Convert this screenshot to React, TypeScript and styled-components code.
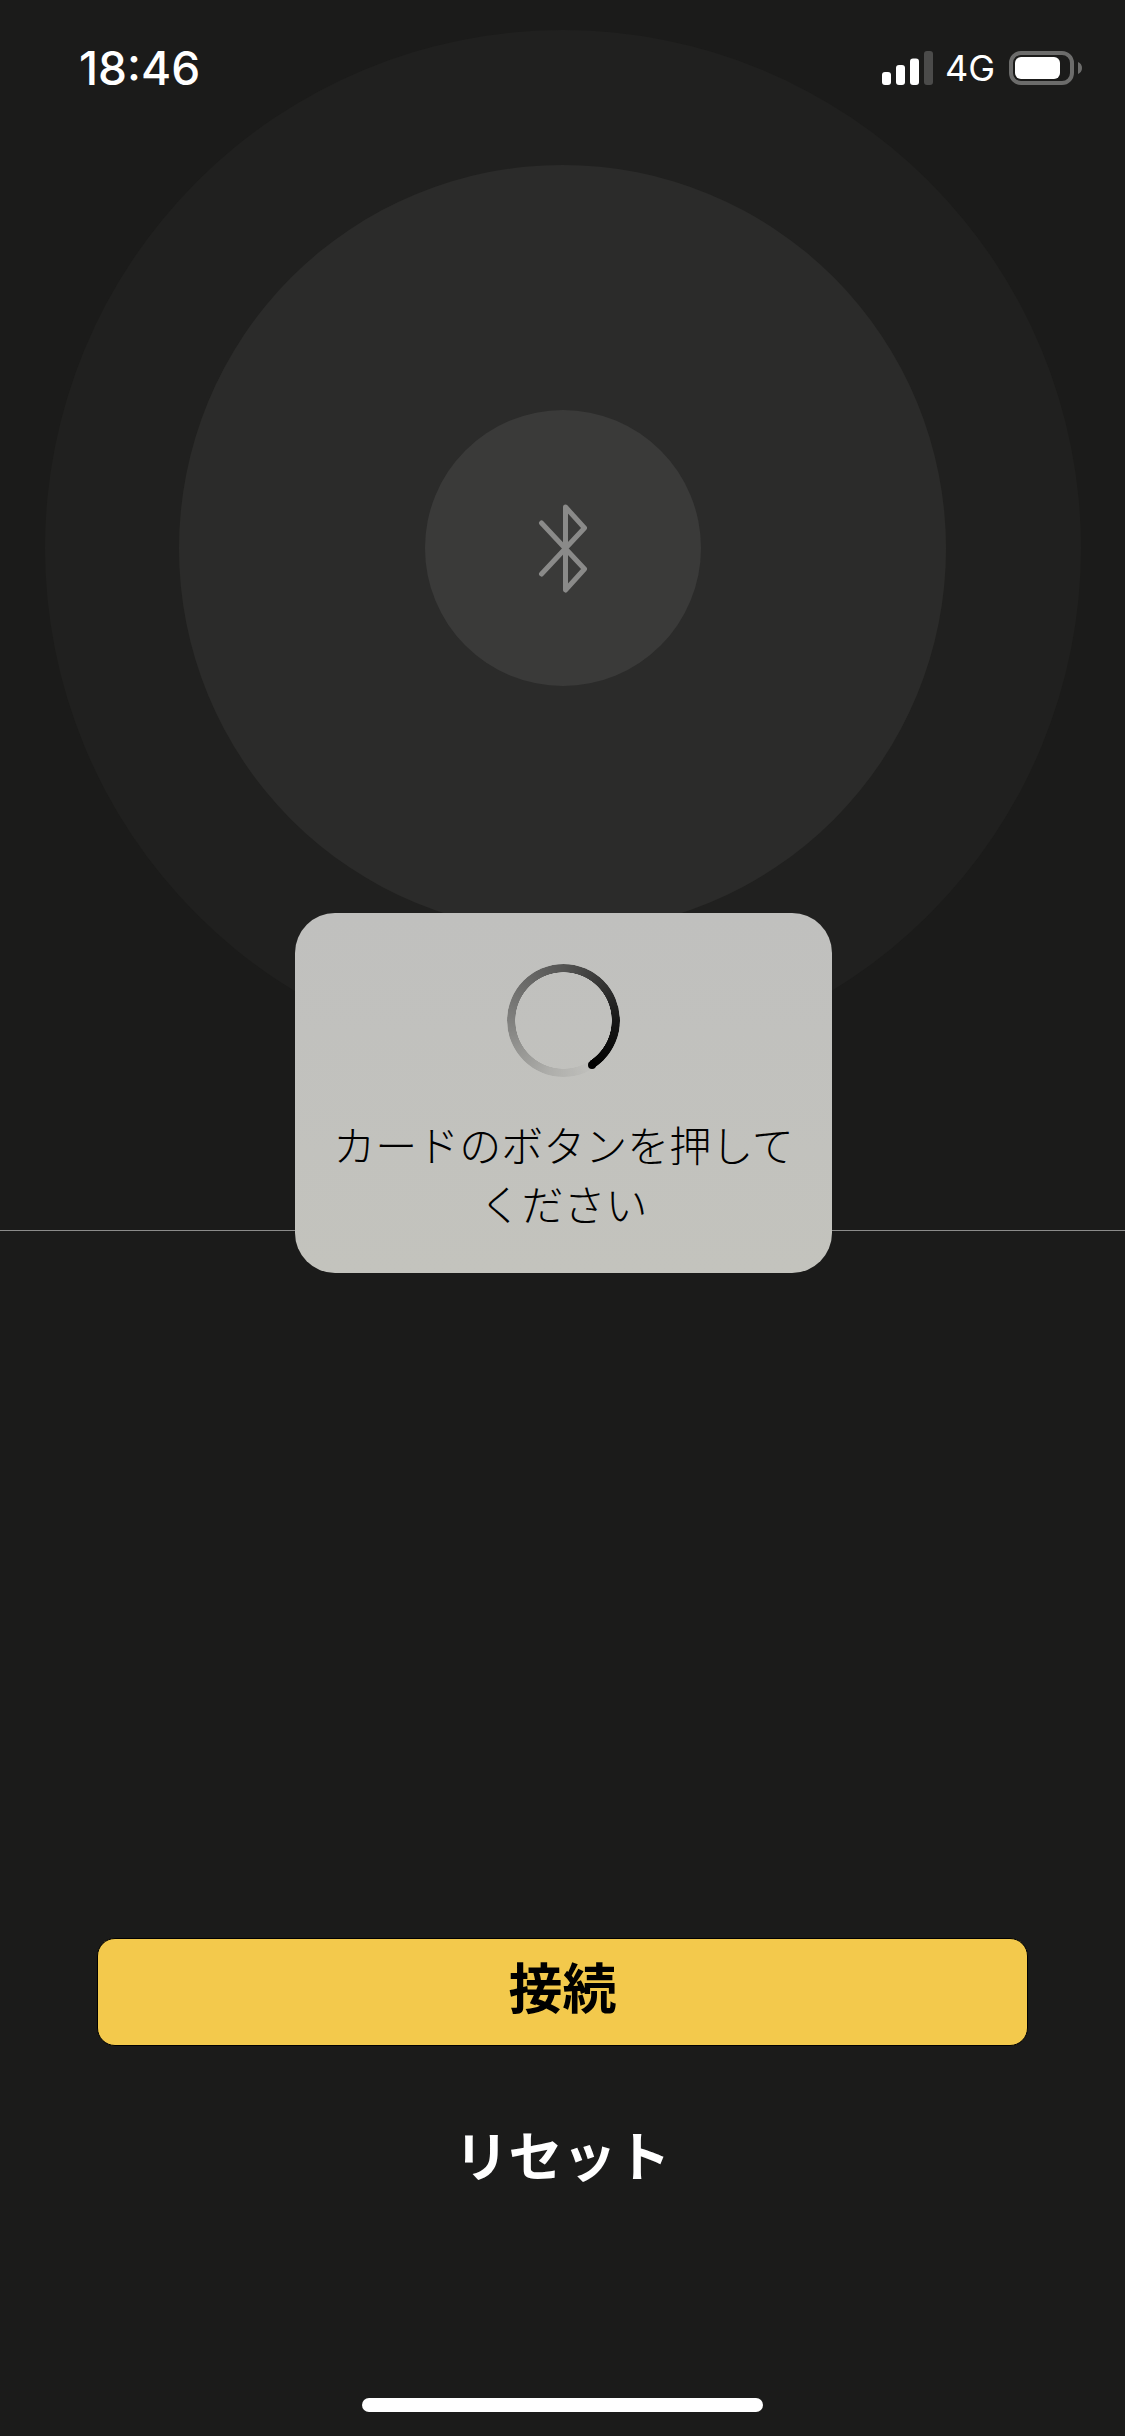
import React from "react";
import styled, { createGlobalStyle } from "styled-components";

const GlobalStyle = createGlobalStyle`
  html, body {
    margin: 0;
    padding: 0;
    background: #1b1b1a;
  }
`;

const JP_FONT = `"Noto Sans CJK JP", "Noto Sans", sans-serif`;

const Page = styled.div`
  position: relative;
  width: 1125px;
  height: 2436px;
  overflow: hidden;
  display: flex;
  flex-direction: column;
  align-items: center;
  background: #1b1b1a;
  font-family: ${JP_FONT};
`;

const StatusBar = styled.div`
  position: absolute;
  top: 0;
  left: 0;
  right: 0;
  height: 136px;
  padding: 0 43px 0 79px;
  box-sizing: border-box;
  display: flex;
  align-items: center;
  justify-content: space-between;
  color: #fff;
  font-family: Inter, "Liberation Sans", sans-serif;
`;

const Clock = styled.div`
  font-size: 46px;
  font-weight: 500;
  line-height: 1;
`;

const StatusIcons = styled.div`
  display: flex;
  align-items: center;
  gap: 14px;
`;

const SignalWrap = styled.div`
  display: flex;
  margin-right: -3px;
`;

const Network = styled.div`
  font-size: 36px;
  font-weight: 400;
  line-height: 1;
`;

const Radar = styled.section`
  width: 100%;
  height: 1231px;
  box-sizing: border-box;
  padding-top: 30px;
  display: flex;
  justify-content: center;
  align-items: flex-start;
  border-bottom: 1px solid #8c8c8b;
`;

const Ring = styled.div<{ $size: number; $color: string }>`
  width: ${(p) => p.$size}px;
  height: ${(p) => p.$size}px;
  flex: none;
  border-radius: 50%;
  background: ${(p) => p.$color};
  display: flex;
  align-items: center;
  justify-content: center;
`;

const Overlay = styled.div`
  position: absolute;
  top: 913px;
  left: 2px;
  right: 0;
  display: flex;
  justify-content: center;
`;

const Dialog = styled.div`
  width: 537px;
  height: 360px;
  box-sizing: border-box;
  padding-top: 51px;
  border-radius: 40px;
  background: linear-gradient(180deg, #c0c0be 0%, #c3c3bd 100%);
  display: flex;
  flex-direction: column;
  align-items: center;
`;

const SpinnerBox = styled.div`
  position: relative;
  width: 113px;
  height: 113px;
  &::after {
    content: "";
    position: absolute;
    left: 81px;
    top: 97px;
    width: 8px;
    height: 8px;
    border-radius: 50%;
    background: #000;
  }
`;

const SpinnerRing = styled.div`
  width: 100%;
  height: 100%;
  border-radius: 50%;
  background: conic-gradient(
    from 147deg,
    rgba(0, 0, 0, 0) 0deg,
    rgba(0, 0, 0, 0.1) 50deg,
    rgba(0, 0, 0, 0.34) 125deg,
    rgba(0, 0, 0, 0.56) 213deg,
    rgba(0, 0, 0, 0.88) 303deg,
    #000 360deg
  );
  -webkit-mask: radial-gradient(circle, transparent 48px, #000 48.5px);
  mask: radial-gradient(circle, transparent 48px, #000 48.5px);
`;

const Message = styled.p`
  width: 470px;
  margin: 37px 0 0;
  color: #000;
  font-size: 42px;
  font-weight: 300;
  line-height: 59px;
  text-align: center;
`;

const Actions = styled.section`
  flex: 1;
  width: 100%;
  box-sizing: border-box;
  padding: 707px 97px 24px;
  display: flex;
  flex-direction: column;
  align-items: center;
`;

const ConnectButton = styled.button`
  width: 100%;
  height: 108px;
  flex: none;
  padding: 0 0 12px;
  border: 1.5px solid #000;
  border-radius: 18px;
  background: #f3c94c;
  color: #000;
  font-family: ${JP_FONT};
  font-size: 54px;
  font-weight: 700;
  line-height: 1;
`;

const ResetButton = styled.button`
  margin-top: 68px;
  padding: 0;
  border: none;
  background: none;
  color: #fff;
  font-family: ${JP_FONT};
  font-size: 54px;
  font-weight: 700;
  line-height: 80px;
`;

const HomeIndicator = styled.div`
  width: 401px;
  height: 14px;
  margin-top: auto;
  border-radius: 7px;
  background: #fff;
`;

const SignalIcon = () => (
  <svg width="52" height="34" viewBox="0 0 52 34">
    <rect x="0" y="21" width="9" height="13" rx="3" fill="#fff" />
    <rect x="14" y="14" width="9" height="20" rx="3" fill="#fff" />
    <rect x="28" y="7.5" width="9" height="26.5" rx="3" fill="#fff" />
    <rect x="42" y="0" width="9" height="34" rx="3" fill="#4b4b4a" />
  </svg>
);

const BatteryIcon = () => (
  <svg width="73" height="34" viewBox="0 0 73 34">
    <rect x="2" y="2" width="61" height="30" rx="10" fill="none" stroke="#6c6c6b" strokeWidth="4" />
    <rect x="6" y="6" width="45" height="22" rx="6" fill="#fff" />
    <path d="M69 11 C71.5 12 73 14 73 17 C73 20 71.5 22 69 23 Z" fill="#6c6c6b" />
  </svg>
);

const BluetoothIcon = () => (
  <svg width="56" height="96" viewBox="0 0 56 96" fill="none">
    <path
      d="M6.5 23 L49.5 69 L30.5 90 V7 L49.5 28 L6.5 74"
      stroke="#8a8a89"
      strokeWidth="5"
      strokeLinecap="round"
      strokeLinejoin="round"
    />
  </svg>
);

export default function App() {
  return (
    <Page>
      <GlobalStyle />
      <Radar>
        <Ring $size={1036} $color="#20201f">
          <Ring $size={767} $color="#2b2b2a">
            <Ring $size={276} $color="#3a3a39">
              <BluetoothIcon />
            </Ring>
          </Ring>
        </Ring>
      </Radar>
      <StatusBar>
        <Clock>18:46</Clock>
        <StatusIcons>
          <SignalWrap>
            <SignalIcon />
          </SignalWrap>
          <Network>4G</Network>
          <BatteryIcon />
        </StatusIcons>
      </StatusBar>
      <Overlay>
        <Dialog>
          <SpinnerBox>
            <SpinnerRing />
          </SpinnerBox>
          <Message>カードのボタンを押してください</Message>
        </Dialog>
      </Overlay>
      <Actions>
        <ConnectButton>接続</ConnectButton>
        <ResetButton>リセット</ResetButton>
        <HomeIndicator />
      </Actions>
    </Page>
  );
}
